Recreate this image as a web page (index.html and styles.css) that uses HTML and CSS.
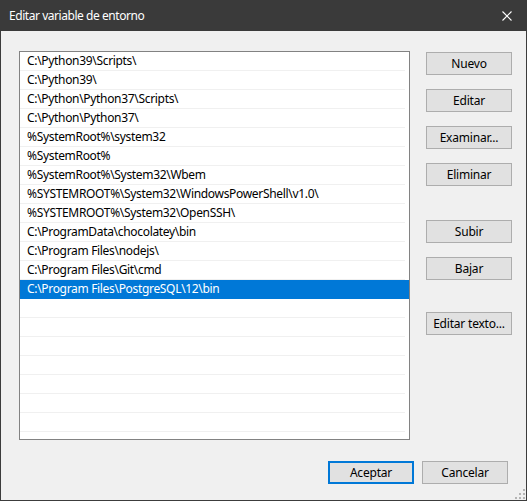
FILE: index.html
```html
<!DOCTYPE html>
<html lang="es">
<head>
<meta charset="utf-8">
<title>Editar variable de entorno</title>
<link rel="stylesheet" href="styles.css">
</head>
<body>
<div class="window">
  <div class="titlebar">
    <span class="title">Editar variable de entorno</span>
    <svg class="close" width="10" height="10" viewBox="0 0 10 10"><path d="M0.5 0.5 L9.5 9.5 M9.5 0.5 L0.5 9.5" stroke="#ffffff" stroke-width="1.1" fill="none"/></svg>
  </div>
  <div class="content">
    <div class="main">
      <div class="list">
        <div class="row">C:\Python39\Scripts\</div>
        <div class="row">C:\Python39\</div>
        <div class="row">C:\Python\Python37\Scripts\</div>
        <div class="row">C:\Python\Python37\</div>
        <div class="row">%SystemRoot%\system32</div>
        <div class="row">%SystemRoot%</div>
        <div class="row">%SystemRoot%\System32\Wbem</div>
        <div class="row">%SYSTEMROOT%\System32\WindowsPowerShell\v1.0\</div>
        <div class="row">%SYSTEMROOT%\System32\OpenSSH\</div>
        <div class="row">C:\ProgramData\chocolatey\bin</div>
        <div class="row">C:\Program Files\nodejs\</div>
        <div class="row">C:\Program Files\Git\cmd</div>
        <div class="row selected">C:\Program Files\PostgreSQL\12\bin</div>
        <div class="row"></div>
        <div class="row"></div>
        <div class="row"></div>
        <div class="row"></div>
        <div class="row"></div>
        <div class="row"></div>
        <div class="row"></div>
        <div class="row"></div>
      </div>
      <div class="side">
        <div class="group">
          <button class="btn">Nuevo</button>
          <button class="btn">Editar</button>
          <button class="btn">Examinar...</button>
          <button class="btn">Eliminar</button>
        </div>
        <div class="group g2">
          <button class="btn">Subir</button>
          <button class="btn">Bajar</button>
        </div>
        <div class="group g3">
          <button class="btn">Editar texto...</button>
        </div>
      </div>
    </div>
    <div class="footer">
      <button class="btn default">Aceptar</button>
      <button class="btn">Cancelar</button>
    </div>
    <svg class="grip" width="11" height="11" viewBox="0 0 11 11">
      <rect x="9" y="1" width="2" height="2" fill="#b4b4b4"/>
      <rect x="5" y="5" width="2" height="2" fill="#b4b4b4"/>
      <rect x="9" y="5" width="2" height="2" fill="#b4b4b4"/>
      <rect x="1" y="9" width="2" height="2" fill="#b4b4b4"/>
      <rect x="5" y="9" width="2" height="2" fill="#b4b4b4"/>
      <rect x="9" y="9" width="2" height="2" fill="#b4b4b4"/>
    </svg>
  </div>
</div>
</body>
</html>
```
FILE: styles.css
```css
* { box-sizing: border-box; }
html, body { margin: 0; padding: 0; }
body {
  width: 527px;
  height: 501px;
  overflow: hidden;
  font-family: "Segoe UI", "Noto Sans", "Open Sans", sans-serif;
  font-size: 12px;
  color: #000;
  background: #3c3c3c;
}
.window {
  width: 527px;
  height: 501px;
  display: flex;
  flex-direction: column;
}
.titlebar {
  height: 31px;
  flex: none;
  background: #3a3a3a;
  color: #ffffff;
  display: flex;
  align-items: center;
  justify-content: space-between;
  padding: 0 15px 0 9px;
}
.title { font-size: 12px; letter-spacing: -0.45px; }
.close { display: block; margin-top: 1px; }
.content {
  position: relative;
  flex: 1;
  background: #f0f0f0;
  margin: 0 1px 1px 1px;
  padding: 20px 0 0 18px;
  display: flex;
  flex-direction: column;
}
.main {
  display: flex;
  align-items: flex-start;
}
.list {
  width: 391px;
  height: 389px;
  background: #ffffff;
  border: 1px solid #828282;
  overflow: hidden;
}
.row {
  height: 19px;
  line-height: 18px;
  padding-left: 7px;
  white-space: nowrap;
  letter-spacing: -0.32px;
  background: linear-gradient(#f0f0f0, #f0f0f0) left bottom / calc(100% - 4px) 1px no-repeat;
}
.row.selected {
  background: #0078d7;
  color: #ffffff;
}
.side {
  margin-left: 16px;
  margin-top: 1px;
  display: flex;
  flex-direction: column;
}
.group {
  display: flex;
  flex-direction: column;
  gap: 14px;
}
.g2 { margin-top: 34px; }
.g3 { margin-top: 32px; }
.btn {
  width: 86px;
  height: 23px;
  padding: 0;
  margin: 0;
  background: #e1e1e1;
  border: 1px solid #adadad;
  font-family: inherit;
  font-size: 12px;
  color: #000;
  letter-spacing: -0.2px;
}
.btn.default {
  border: 2px solid #0078d7;
}
.footer {
  display: flex;
  justify-content: flex-end;
  gap: 8px;
  margin-top: 21px;
  padding-right: 18px;
}
.grip {
  position: absolute;
  right: 1px;
  bottom: 1px;
}
```
